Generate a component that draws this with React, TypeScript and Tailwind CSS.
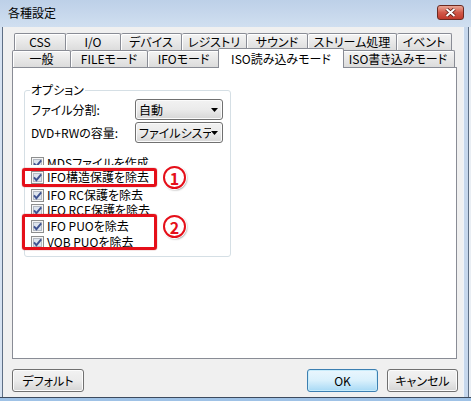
import React from "react";

const row1 = [
  { label: "CSS", cls: "w-[52px] border-l" },
  { label: "I/O", cls: "w-[55px]" },
  { label: "デバイス", cls: "w-[61px]" },
  { label: "レジストリ", cls: "w-[65px]" },
  { label: "サウンド", cls: "w-[61px]" },
  { label: "ストリーム処理", cls: "w-[89px]" },
  { label: "イベント", cls: "w-[55px]" },
];

const checks = [
  { label: "MDSファイルを作成", cls: "h-[9px] items-start pt-[1px]" },
  { label: "IFO構造保護を除去", cls: "h-[22px] items-center pt-[2px]" },
  { label: "IFO RC保護を除去", cls: "h-[16px] items-center" },
  { label: "IFO RCE保護を除去", cls: "h-[15px] items-start pt-[1px]" },
  { label: "IFO PUOを除去", cls: "h-[16px] items-center" },
  { label: "VOB PUOを除去", cls: "h-[16px] items-center" },
];

function Tab({ label, cls }: { label: string; cls: string }) {
  return (
    <div
      className={`${cls} h-[17px] flex items-center justify-center border-t border-r border-[#898c95] rounded-t-[2px] bg-gradient-to-b from-[#f4f4f4] to-[#dcdcdc] shadow-[inset_1px_1px_0_#ffffff] text-[12px] leading-none text-black`}
    >
      {label}
    </div>
  );
}

function CheckBox() {
  return (
    <svg width="13" height="13" viewBox="0 0 13 13" className="shrink-0">
      <rect x="0.5" y="0.5" width="12" height="12" fill="#f6f6f6" stroke="#8e8f8f" />
      <rect x="2.5" y="2.5" width="8" height="8" fill="#dde4ee" stroke="#b4bac3" />
      <path d="M3 6.4 L5.4 9.2 L10.2 3.4" fill="none" stroke="#3f5391" strokeWidth="1.9" />
    </svg>
  );
}

function Select({ value }: { value: string }) {
  return (
    <div className="w-[88px] h-[21px] flex items-center pl-[3px] pr-[4px] rounded-[3px] border border-[#707070] bg-gradient-to-b from-[#f2f2f2] via-[#ebebeb] to-[#d6d6d6] shadow-[inset_0_0_0_1px_#fbfbfb]">
      <span className="w-[72px] overflow-hidden whitespace-nowrap text-[12px] leading-none">{value}</span>
      <svg width="7" height="4" viewBox="0 0 7 4" className="ml-auto">
        <path d="M0 0h7L3.5 4z" fill="#000" />
      </svg>
    </div>
  );
}

function Circle({ n, cls }: { n: string; cls: string }) {
  return (
    <div
      className={`absolute ${cls} w-[23px] h-[23px] rounded-full border-2 border-[#e50f19] bg-white flex items-center justify-center text-[16px] font-bold leading-none text-[#e50f19] shadow-[0_0_0_1px_#ffffff,1px_1px_2px_rgba(0,0,0,0.45)]`}
    >
      {n}
    </div>
  );
}

export default function App() {
  return (
    <div className="w-[471px] h-[401px] flex flex-col bg-[#c6d7ec] font-['Noto_Sans_CJK_JP',sans-serif] [font-feature-settings:'palt'] text-black overflow-hidden">
      {/* title bar */}
      <div className="h-[27px] shrink-0 flex items-start justify-between bg-gradient-to-b from-[#bdd0e8] to-[#d0dff0]">
        <span className="pl-[8px] pt-[6px] text-[12px] leading-[14px]">各種設定</span>
        <div className="mt-[5px] mr-[7px] w-[27px] h-[15px] rounded-[3px] border border-[#6b2a22] bg-gradient-to-b from-[#e9a697] via-[#d2594a] to-[#c0392b] flex items-center justify-center">
          <svg width="11" height="9" viewBox="0 0 11 9">
            <path d="M1.5 1 L9.5 8 M9.5 1 L1.5 8" stroke="#5a1a12" strokeWidth="3.6" />
            <path d="M1.5 1 L9.5 8 M9.5 1 L1.5 8" stroke="#ffffff" strokeWidth="2" />
          </svg>
        </div>
      </div>

      <div className="h-[370px] flex">
        <div className="w-[2px] bg-[#d6e2f1]" />
        {/* client */}
        <div className="w-[461px] border-l border-[#5e6f85] bg-[#f0f0f0] flex flex-col">
          <div className="mt-[6px] ml-[11px] flex">
            {row1.map((t) => (
              <Tab key={t.label} label={t.label} cls={t.cls} />
            ))}
          </div>
          <div className="ml-[9px] h-[17px] flex items-start">
            <Tab label="一般" cls="w-[59px] border-l" />
            <Tab label="FILEモード" cls="w-[77px]" />
            <Tab label="IFOモード" cls="w-[72px]" />
            <div className="relative z-10 -mt-[2px] -mx-[2px] w-[126px] h-[20px] flex items-center justify-center border border-b-0 border-[#898c95] rounded-t-[2px] bg-white text-[12px] leading-none">
              ISO読み込みモード
            </div>
            <Tab label="ISO書き込みモード" cls="w-[113px]" />
          </div>

          {/* tab page */}
          <div className="ml-[9px] w-[445px] h-[292px] border border-[#898c95] bg-white">
            <fieldset className="mt-[15px] ml-[11px] w-[207px] border border-[#d5dfe5] rounded-[3px] px-[5px] pt-[2px] pb-[6px]">
              <legend className="px-[1px] text-[12px] leading-[14px]">オプション</legend>
              <div className="flex items-center h-[21px]">
                <span className="w-[105px] pl-[1px] text-[12px] leading-none">ファイル分割:</span>
                <Select value="自動" />
              </div>
              <div className="flex items-center h-[21px] mt-[2px]">
                <span className="w-[105px] pl-[1px] text-[12px] leading-none">DVD+RWの容量:</span>
                <Select value="ファイルシステム" />
              </div>

              <div className="relative mt-[13px] flex flex-col">
                {checks.map((c) => (
                  <div key={c.label} className={`flex ${c.cls} gap-[3px] pl-[1px] overflow-hidden bg-white`}>
                    <CheckBox />
                    <span className="relative -top-[1px] text-[12px] leading-[13px] whitespace-nowrap">{c.label}</span>
                  </div>
                ))}
                <div className="absolute -left-[8px] top-[12px] w-[135px] h-[19px] border-[3px] border-[#e50f19] rounded-[3px] shadow-[0_0_1px_#8a0008]" />
                <div className="absolute -left-[8px] top-[58px] w-[135px] h-[36px] border-[3px] border-[#e50f19] rounded-[3px] shadow-[0_0_1px_#8a0008]" />
                <Circle n="1" cls="left-[133px] top-[10px]" />
                <Circle n="2" cls="left-[133px] top-[59px]" />
              </div>
            </fieldset>
          </div>

          {/* buttons */}
          <div className="mt-[10px] pl-[9px] pr-[5px] flex items-center">
            <button className="w-[72px] h-[23px] rounded-[3px] border border-[#707070] bg-gradient-to-b from-[#f2f2f2] via-[#ebebeb] to-[#d5d5d5] shadow-[inset_0_0_0_1px_#fcfcfc] text-[12px] leading-none">
              デフォルト
            </button>
            <button className="ml-auto w-[71px] h-[23px] rounded-[3px] border border-[#3c7fb1] bg-gradient-to-b from-[#eaf6fd] via-[#d9f0fc] to-[#a7d9f5] shadow-[inset_0_0_0_1px_#c8ecfb] text-[12px] leading-none">
              OK
            </button>
            <button className="ml-[9px] w-[71px] h-[23px] rounded-[3px] border border-[#707070] bg-gradient-to-b from-[#f2f2f2] via-[#ebebeb] to-[#d5d5d5] shadow-[inset_0_0_0_1px_#fcfcfc] text-[12px] leading-none">
              キャンセル
            </button>
          </div>
        </div>
        <div className="flex-1 flex">
          <div className="w-[5px] border-l border-[#eef3f9] bg-[#c6d7ec]" />
          <div className="flex-1 border-l border-[#5e6f85] bg-[#e9eef4]" />
        </div>
      </div>
      <div className="h-[4px] border-t border-[#3d4b5e] bg-[#9fc2e6]" />
    </div>
  );
}
